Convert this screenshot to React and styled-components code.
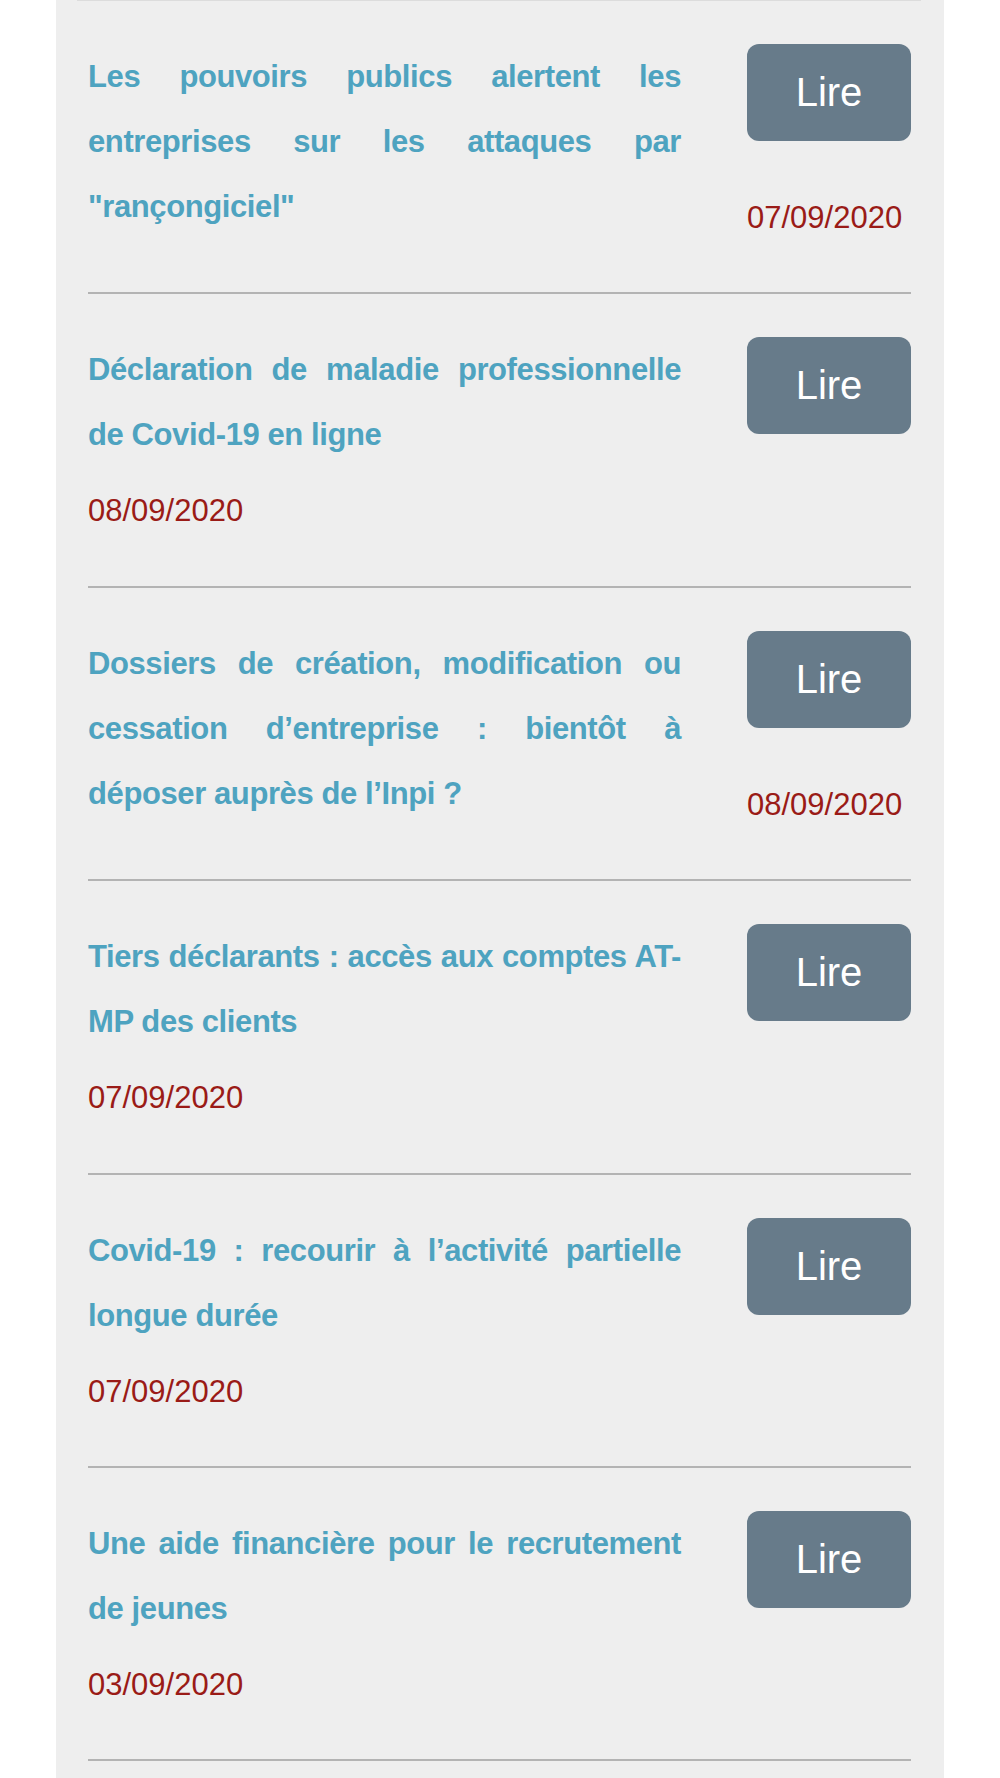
import React from "react";
import styled, { createGlobalStyle } from "styled-components";

const GlobalStyle = createGlobalStyle`
  html, body {
    margin: 0;
    padding: 0;
    background: #ffffff;
  }
  body {
    font-family: "Liberation Sans", Helvetica, Arial, sans-serif;
    -webkit-font-smoothing: antialiased;
  }
  * {
    box-sizing: border-box;
  }
`;

const Panel = styled.main`
  width: 888px;
  min-height: 100vh;
  margin-left: 56px;
  padding: 0 33px 0 32px;
  background: #eeeeee;
`;

const TopRule = styled.div`
  height: 1px;
  margin: 0 -10px 0 -11px;
  background: #dcdcdc;
`;

const List = styled.ul`
  list-style: none;
  margin: 0;
  padding: 0;
`;

const Article = styled.li`
  display: flex;
  gap: 66px;
  height: 293.4px;
  padding-top: 43px;
  border-bottom: 2px solid #b3b3b3;
`;

const Body = styled.div`
  flex: 1 1 auto;
  min-width: 0;
`;

const Title = styled.h2`
  margin: 0;
  font-size: 31px;
  font-weight: 700;
  line-height: 65px;
  letter-spacing: -0.4px;
  color: #4ea3c0;
  text-align: justify;
`;

const DateText = styled.div`
  margin-top: ${({ $gap }) => $gap}px;
  font-size: 31px;
  line-height: 36px;
  color: #9a1b17;
`;

const Side = styled.div`
  flex: 0 0 164px;
`;

const ReadButton = styled.button`
  display: flex;
  align-items: center;
  justify-content: center;
  width: 164px;
  height: 97px;
  padding: 0;
  border: none;
  border-radius: 12px;
  background: #677b8a;
  color: #ffffff;
  font-family: inherit;
  font-size: 40px;
  cursor: pointer;
`;

const articles = [
  {
    title: 'Les pouvoirs publics alertent les entreprises sur les attaques par "rançongiciel"',
    date: "07/09/2020",
    dateSide: "right",
  },
  {
    title: "Déclaration de maladie professionnelle de Covid-19 en ligne",
    date: "08/09/2020",
  },
  {
    title:
      "Dossiers de création, modification ou cessation d’entreprise : bientôt à déposer auprès de l’Inpi ?",
    date: "08/09/2020",
    dateSide: "right",
  },
  {
    title: "Tiers déclarants : accès aux comptes AT-MP des clients",
    date: "07/09/2020",
  },
  {
    title: "Covid-19 : recourir à l’activité partielle longue durée",
    date: "07/09/2020",
  },
  {
    title: "Une aide financière pour le recrutement de jeunes",
    date: "03/09/2020",
  },
];

function NewsItem({ title, date, dateSide }) {
  const onRight = dateSide === "right";
  return (
    <Article>
      <Body>
        <Title>{title}</Title>
        {!onRight && <DateText $gap={26}>{date}</DateText>}
      </Body>
      <Side>
        <ReadButton>Lire</ReadButton>
        {onRight && <DateText $gap={59}>{date}</DateText>}
      </Side>
    </Article>
  );
}

export default function App() {
  return (
    <>
      <GlobalStyle />
      <Panel>
        <TopRule />
        <List>
          {articles.map((a, i) => (
            <NewsItem key={i} {...a} />
          ))}
        </List>
      </Panel>
    </>
  );
}
